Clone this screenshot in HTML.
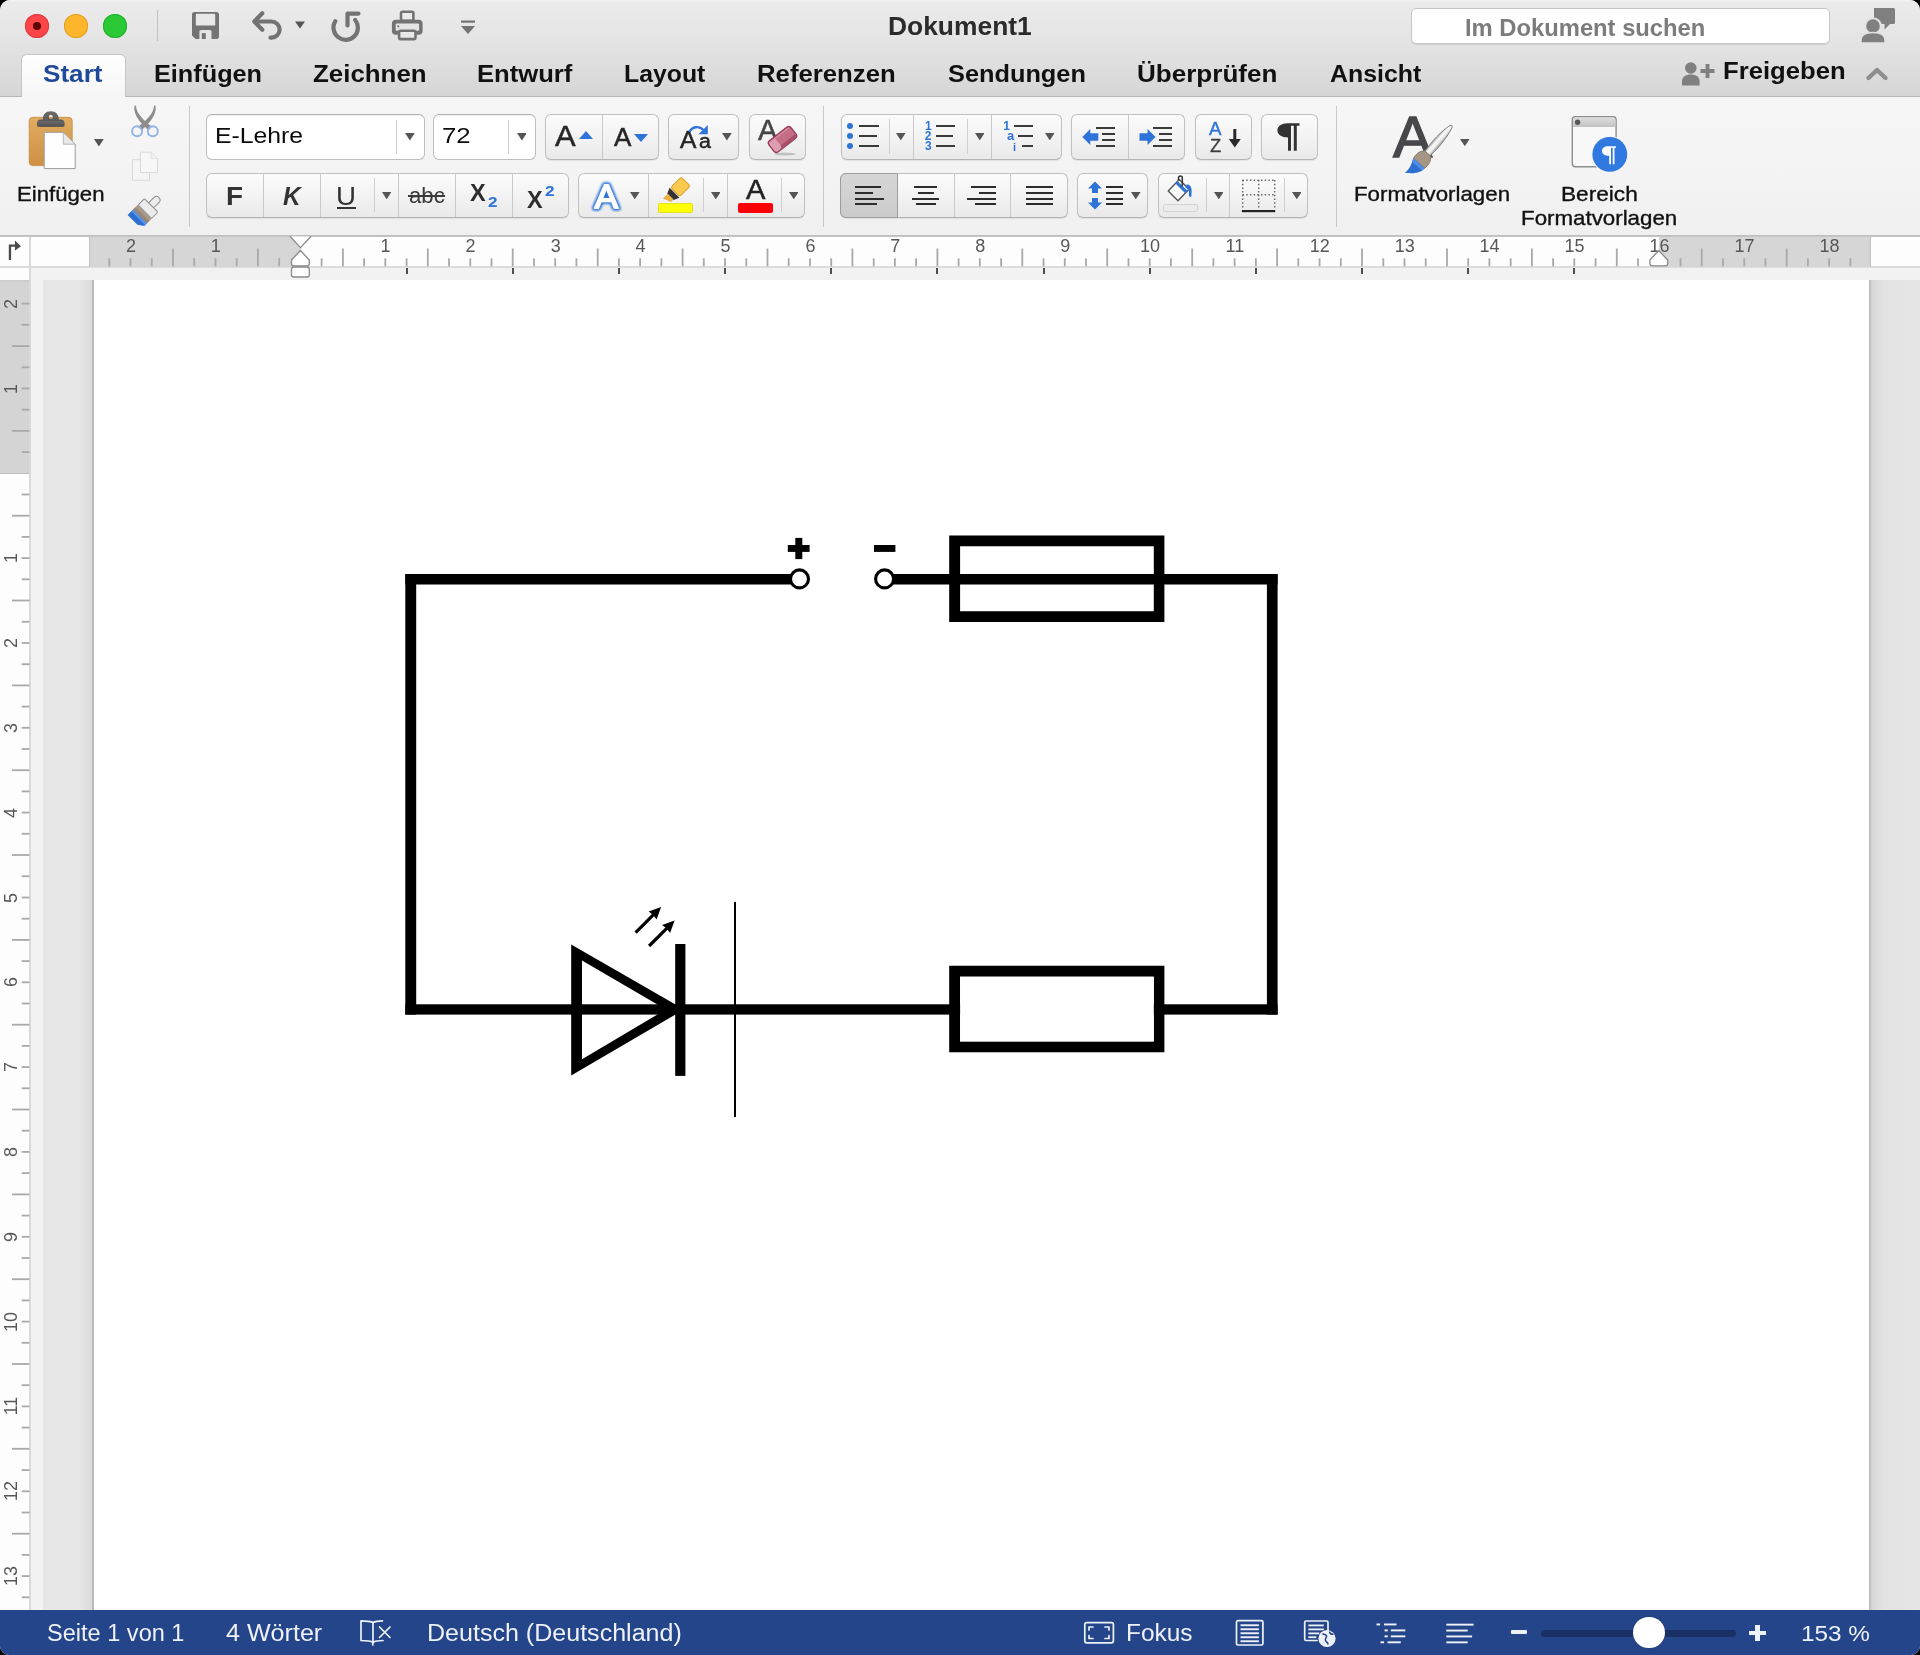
<!DOCTYPE html>
<html><head><meta charset="utf-8"><title>Dokument1</title>
<style>
html,body{margin:0;padding:0}
body{width:1920px;height:1655px;background:#000;position:relative;overflow:hidden;font-family:"Liberation Sans",sans-serif;}
#win{position:absolute;left:0;top:0;width:1920px;height:1655px;border-radius:10px 10px 9px 9px;overflow:hidden;background:#fff;will-change:transform;}
.a{position:absolute;display:block}
.t{position:absolute;white-space:nowrap;line-height:1;transform-origin:0 50%;display:block}
</style></head>
<body>
<div id="win">
<!-- title -->
<div class="a" style="left:0px;top:0px;width:1920px;height:96px;background:linear-gradient(#f3f3f3 0px,#ebebeb 2px,#e4e4e4 40px,#d6d6d6 96px);"></div>
<div class="a" style="left:0px;top:96px;width:1920px;height:1.8px;background:linear-gradient(#b3b3b3,#c6c6c6);"></div>
<div class="a" style="left:25px;top:13.5px;width:24px;height:24px;border-radius:50%;background:#fc4548;box-shadow:inset 0 0 0 1px #e2383c;"></div>
<div class="a" style="left:64px;top:13.5px;width:24px;height:24px;border-radius:50%;background:#fdb62c;box-shadow:inset 0 0 0 1px #e0a024;"></div>
<div class="a" style="left:103px;top:13.5px;width:24px;height:24px;border-radius:50%;background:#2ac935;box-shadow:inset 0 0 0 1px #24ad2c;"></div>
<div class="a" style="left:33px;top:21.5px;width:8px;height:8px;border-radius:50%;background:#5b0001;"></div>
<div class="a" style="left:157px;top:10px;width:1px;height:31px;background:#c2c2c2;"></div>
<svg class="a" style="left:192px;top:12px;" width="27" height="27" viewBox="0 0 27 27"><path d="M2.500 0H24.500A2.500 2.500 0 0 1 27 2.500V24.500A2.500 2.500 0 0 1 24.500 27H3.500L0 23.500V2.500A2.500 2.500 0 0 1 2.500 0Z" fill="#737373"/><rect x="3.800" y="1.800" width="19.400" height="11.800" rx="1.200" fill="#e8e8e8"/><path d="M7.400 27V19.600A1.700 1.700 0 0 1 9.100 17.900H17.800A1.700 1.700 0 0 1 19.500 19.600V27Z" fill="#e4e4e4"/><rect x="9.800" y="21.100" width="4" height="5.900" fill="#737373"/></svg>
<svg class="a" style="left:250px;top:10px;" width="34" height="32" viewBox="0 0 34 32"><path d="M12.300 3.300L4.300 11.500L12.300 19.700" fill="none" stroke="#737373" stroke-width="4.200" stroke-linecap="round" stroke-linejoin="round"/><path d="M5 11.500H21.500A8.100 8.100 0 0 1 21.500 27.700H20.500" fill="none" stroke="#737373" stroke-width="4.200" stroke-linecap="round"/></svg>
<svg class="a" style="left:295px;top:21px;" width="10" height="8" viewBox="0 0 10 8"><path d="M0 0.500H10L5 7.500Z" fill="#555"/></svg>
<svg class="a" style="left:329px;top:8px;" width="34" height="34" viewBox="0 0 34 34"><path d="M6.300 13.200A12.200 12.200 0 1 0 26.200 12" fill="none" stroke="#737373" stroke-width="4.200" stroke-linecap="round"/><path d="M18.500 17.500V5.600H29.500" fill="none" stroke="#737373" stroke-width="4.200" stroke-linecap="round" stroke-linejoin="round"/></svg>
<svg class="a" style="left:390px;top:9px;" width="34" height="33" viewBox="0 0 34 33"><rect x="11" y="2.800" width="12.400" height="9" rx="1.500" fill="#ebebeb" stroke="#737373" stroke-width="2.600"/><rect x="1.900" y="10.700" width="30.700" height="15" rx="4" fill="#737373"/><rect x="5.700" y="14.400" width="23.400" height="7.300" rx="1" fill="#e4e4e4"/><circle cx="8.300" cy="17.300" r="1.100" fill="#737373"/><rect x="9.100" y="21.700" width="16.400" height="8.400" rx="1.500" fill="#e9e9e9" stroke="#737373" stroke-width="2.600"/></svg>
<svg class="a" style="left:460px;top:19px;" width="16" height="17" viewBox="0 0 16 17"><rect x="1" y="1.500" width="14" height="2.200" fill="#737373"/><path d="M1 7H15L8 15Z" fill="#737373"/></svg>
<span class="t" style="left:888.0px;top:14.0px;font-size:25px;color:#2b2b2b;font-weight:bold;transform:scaleX(1.0557);">Dokument1</span>
<div class="a" style="left:1411px;top:7.5px;width:418.5px;height:36px;background:#fff;border:1px solid #c6c6c6;border-radius:5px;box-sizing:border-box;box-shadow:0 1px 0 rgba(0,0,0,.08);"></div>
<span class="t" style="left:1465.1px;top:16.0px;font-size:24px;color:#7c7c7c;font-weight:bold;transform:scaleX(0.9902);">Im Dokument suchen</span>
<svg class="a" style="left:1860px;top:7px;" width="36" height="37" viewBox="0 0 36 37"><path d="M14 1H33.500A1.500 1.500 0 0 1 35 2.500V15.500A1.500 1.500 0 0 1 33.500 17H30L24.500 22.500V17H14Z" fill="#808080"/><circle cx="13" cy="19" r="7.800" fill="#808080" stroke="#e2e2e2" stroke-width="2"/><path d="M1 36V33C1 28 5.500 25.500 13 25.500S25 28 25 33V36Z" fill="#808080" stroke="#e2e2e2" stroke-width="1.500"/></svg>
<div class="a" style="left:22px;top:55px;width:103px;height:42px;background:linear-gradient(#fefefe,#f6f6f6);border-radius:5px 5px 0 0;box-shadow:0 0 0 1px #c4c4c4;"></div>
<div class="a" style="left:22px;top:96px;width:103px;height:2.5px;background:#f6f6f6;"></div>
<span class="t" style="left:43.0px;top:62.0px;font-size:24px;color:#1f4a9a;font-weight:bold;transform:scaleX(1.0884);">Start</span>
<span class="t" style="left:153.9px;top:62.0px;font-size:24px;color:#111;font-weight:bold;transform:scaleX(1.0526);">Einfügen</span>
<span class="t" style="left:313.2px;top:62.0px;font-size:24px;color:#111;font-weight:bold;transform:scaleX(1.0780);">Zeichnen</span>
<span class="t" style="left:476.9px;top:62.0px;font-size:24px;color:#111;font-weight:bold;transform:scaleX(1.0678);">Entwurf</span>
<span class="t" style="left:624.0px;top:62.0px;font-size:24px;color:#111;font-weight:bold;transform:scaleX(1.0338);">Layout</span>
<span class="t" style="left:757.0px;top:62.0px;font-size:24px;color:#111;font-weight:bold;transform:scaleX(1.0719);">Referenzen</span>
<span class="t" style="left:947.5px;top:62.0px;font-size:24px;color:#111;font-weight:bold;transform:scaleX(1.0553);">Sendungen</span>
<span class="t" style="left:1137.1px;top:62.0px;font-size:24px;color:#111;font-weight:bold;transform:scaleX(1.0854);">Überprüfen</span>
<span class="t" style="left:1329.5px;top:62.0px;font-size:24px;color:#111;font-weight:bold;transform:scaleX(1.0372);">Ansicht</span>
<span class="t" style="left:1722.9px;top:59.0px;font-size:24px;color:#111;font-weight:bold;transform:scaleX(1.0694);">Freigeben</span>
<svg class="a" style="left:1681px;top:60px;" width="36" height="26" viewBox="0 0 36 26"><circle cx="9.800" cy="8" r="5.800" fill="#808080"/><path d="M1 25.500V21.500C1 17 4.500 14.600 9.800 14.600S18.600 17 18.600 21.500V25.500Z" fill="#808080"/><path d="M26.500 4V18M19.500 11H33.500" stroke="#808080" stroke-width="3.900" fill="none"/></svg>
<svg class="a" style="left:1865px;top:65px;" width="24" height="17" viewBox="0 0 24 17"><path d="M3.500 13L12 5L20.500 13" fill="none" stroke="#8e8e8e" stroke-width="4.400" stroke-linecap="round" stroke-linejoin="round"/></svg>
<!-- ribbon -->
<div class="a" style="left:0px;top:97px;width:1920px;height:138px;background:linear-gradient(#f6f6f6,#f4f4f4 40%,#f0f0f0);"></div>
<div class="a" style="left:0px;top:235px;width:1920px;height:2px;background:linear-gradient(#bcbcbc,#c9c9c9);"></div>
<svg class="a" style="left:27px;top:109px;" width="52" height="62" viewBox="0 0 52 62"><defs><linearGradient id="cb" x1="0" y1="0" x2="0" y2="1"><stop offset="0" stop-color="#e2ac60"/><stop offset="1" stop-color="#cf9044"/></linearGradient><linearGradient id="cl" x1="0" y1="0" x2="0" y2="1"><stop offset="0" stop-color="#6a6a6a"/><stop offset="1" stop-color="#505050"/></linearGradient></defs><rect x="2.200" y="8.300" width="43" height="48.300" rx="3.500" fill="url(#cb)" stroke="#c08a44" stroke-width="0.800"/><path d="M10.200 17.600V14A3.500 3.500 0 0 1 13.700 10.500H15.800C15.800 5.500 18.800 2.300 23.800 2.300S31.800 5.500 31.800 10.500H33.900A3.500 3.500 0 0 1 37.400 14V17.600Z" fill="url(#cl)"/><rect x="10.200" y="12" width="27.200" height="5.700" rx="2.800" fill="url(#cl)"/><circle cx="23.800" cy="7.700" r="1.900" fill="#f1e3cc"/><path d="M21.900 7.900A1.900 1.900 0 0 0 25.700 7.900Z" fill="#d89b4a"/><path d="M17.200 23.300H36.300L48.200 35.200V59.600H17.200Z" fill="#fefefe" stroke="#9a9a9a" stroke-width="1"/><path d="M36.300 23.300V35.200H48.200Z" fill="#e9e9e9" stroke="#a8a8a8" stroke-width="0.800"/></svg>
<svg class="a" style="left:94.0px;top:138.85px;" width="9.8" height="7.5" viewBox="0 0 9.8 7.5"><path d="M0 0H9.8L4.9 7.5Z" fill="#555"/></svg>
<span class="t" style="left:16.8px;top:183.0px;font-size:21px;color:#111;transform:scaleX(1.0558);-webkit-text-stroke:0.350px #111;">Einfügen</span>
<svg class="a" style="left:129px;top:104px;" width="32" height="35" viewBox="0 0 32 35"><path d="M6.300 2.200C6.300 7 8.500 12.500 21.800 23L19.400 25.200C8.500 15.500 5 9 6.300 2.200Z" fill="#8d8d8d" stroke="#8d8d8d" stroke-width="1.600" stroke-linejoin="round"/><path d="M25.700 2.200C25.700 7 23.500 12.500 10.200 23L12.600 25.200C23.500 15.500 27 9 25.700 2.200Z" fill="#8d8d8d" stroke="#8d8d8d" stroke-width="1.600" stroke-linejoin="round"/><circle cx="8.100" cy="27.200" r="5" fill="none" stroke="#8fb4e6" stroke-width="1.900"/><circle cx="23.800" cy="27.200" r="5" fill="none" stroke="#8fb4e6" stroke-width="1.900"/></svg>
<svg class="a" style="left:130px;top:150px;" width="30" height="33" viewBox="0 0 30 33"><rect x="2.500" y="9.700" width="17" height="20.500" fill="#f5f5f5" stroke="#d9d9d9" stroke-width="1"/><path d="M10.500 2.200H21L27.500 8.700V22.500H10.500Z" fill="#f7f7f7" stroke="#d9d9d9" stroke-width="1"/><path d="M21 2.200V8.700H27.500" fill="#efefef" stroke="#dcdcdc" stroke-width="0.800"/></svg>
<svg class="a" style="left:126px;top:194px;" width="38" height="34" viewBox="0 0 38 34"><g transform="translate(19.500 17) rotate(45)"><rect x="-3.600" y="-19" width="7.200" height="13" rx="3.600" fill="#ececec" stroke="#8b8b8b" stroke-width="1"/><rect x="-9.500" y="-8" width="19" height="9" rx="1.300" fill="#ebebeb" stroke="#8b8b8b" stroke-width="1"/><path d="M-9.800 1H9.800V8H-9.800Z" fill="#a8998a"/><path d="M-9.800 4.500H9.800V8H-9.800Z" fill="#97887a"/><path d="M-9.800 8H9.800V11.500L4 15.500H-9.800Z" fill="#2d6fd0"/><path d="M-9.800 8H9.800V10.200H-9.800Z" fill="#5596ea"/></g></svg>
<div class="a" style="left:189px;top:106px;width:1px;height:121px;background:#c8c8c8;"></div>
<div class="a" style="left:205.5px;top:113.500px;width:219.0px;height:46.500px;box-sizing:border-box;border:1.500px solid #bdbdbd;border-top-color:#b1b1b1;border-radius:6px;background:#fff;box-shadow:inset 0 1px 1px rgba(0,0,0,.06);"></div>
<div class="a" style="left:432.5px;top:113.500px;width:103.5px;height:46.500px;box-sizing:border-box;border:1.500px solid #bdbdbd;border-top-color:#b1b1b1;border-radius:6px;background:#fff;box-shadow:inset 0 1px 1px rgba(0,0,0,.06);"></div>
<div class="a" style="left:395.7px;top:119.5px;width:1px;height:34px;background:#cfcfcf;"></div>
<div class="a" style="left:507.5px;top:119.5px;width:1px;height:34px;background:#cfcfcf;"></div>
<svg class="a" style="left:404.90000000000003px;top:133.0px;" width="9.8" height="7.6" viewBox="0 0 9.8 7.6"><path d="M0 0H9.8L4.9 7.6Z" fill="#555"/></svg>
<svg class="a" style="left:516.5px;top:133.0px;" width="9.8" height="7.6" viewBox="0 0 9.8 7.6"><path d="M0 0H9.8L4.9 7.6Z" fill="#555"/></svg>
<span class="t" style="left:214.6px;top:125.0px;font-size:22px;color:#0c0c0c;transform:scaleX(1.1258);">E-Lehre</span>
<span class="t" style="left:441.5px;top:125.0px;font-size:22px;color:#0c0c0c;transform:scaleX(1.1689);">72</span>
<div class="a" style="left:545px;top:113.5px;width:114px;height:46.5px;box-sizing:border-box;border:1.300px solid #c0c0c0;border-bottom-color:#b4b4b4;border-radius:6px;background:linear-gradient(#fbfbfb,#f3f3f3 50%,#e9e9e9);box-shadow:0 1px 1px rgba(0,0,0,.07);"></div><div class="a" style="left:601.5px;top:114.5px;width:1px;height:44.5px;background:#c9c9c9;"></div>
<span class="t" style="left:555.3px;top:121.0px;font-size:30px;color:#262626;transform:scaleX(1.0300);-webkit-text-stroke:0.500px #262626;">A</span>
<svg class="a" style="left:579.4px;top:131px;" width="14" height="8" viewBox="0 0 14 8"><path d="M0 8L7 0L14 8Z" fill="#2e74d8"/></svg>
<span class="t" style="left:613.6px;top:125.0px;font-size:25px;color:#262626;transform:scaleX(1.0424);-webkit-text-stroke:0.500px #262626;">A</span>
<svg class="a" style="left:633.5px;top:134.1px;" width="14" height="8" viewBox="0 0 14 8"><path d="M0 0H14L7 8Z" fill="#2e74d8"/></svg>
<div class="a" style="left:668.3px;top:113.5px;width:70.5px;height:46.5px;box-sizing:border-box;border:1.300px solid #c0c0c0;border-bottom-color:#b4b4b4;border-radius:6px;background:linear-gradient(#fbfbfb,#f3f3f3 50%,#e9e9e9);box-shadow:0 1px 1px rgba(0,0,0,.07);"></div>
<span class="t" style="left:679.8px;top:128.0px;font-size:24px;color:#262626;transform:scaleX(1.0250);-webkit-text-stroke:0.500px #262626;">A</span>
<span class="t" style="left:699.2px;top:131.0px;font-size:20px;color:#262626;transform:scaleX(1.0667);-webkit-text-stroke:0.500px #262626;">a</span>
<svg class="a" style="left:686px;top:122px;" width="24" height="14" viewBox="0 0 24 14"><path d="M3.500 10C6 4.500 13 3.500 17.500 8" fill="none" stroke="#2e74d8" stroke-width="2.300"/><path d="M21.800 3V12.200H12.500Z" fill="#2e74d8"/></svg>
<svg class="a" style="left:722.1px;top:133.3px;" width="9.8" height="7.4" viewBox="0 0 9.8 7.4"><path d="M0 0H9.8L4.9 7.4Z" fill="#555"/></svg>
<div class="a" style="left:748.5px;top:113.5px;width:57.0px;height:46.5px;box-sizing:border-box;border:1.300px solid #c0c0c0;border-bottom-color:#b4b4b4;border-radius:6px;background:linear-gradient(#fbfbfb,#f3f3f3 50%,#e9e9e9);box-shadow:0 1px 1px rgba(0,0,0,.07);"></div>
<span class="t" style="left:757.6px;top:116.0px;font-size:29px;color:#454545;transform:scaleX(1.0026);-webkit-text-stroke:0.500px #454545;">A</span>
<svg class="a" style="left:764px;top:122px;" width="36" height="36" viewBox="0 0 36 36"><ellipse cx="21" cy="32" rx="11" ry="1.500" fill="rgba(0,0,0,.18)"/><g transform="translate(18.500 17.500) rotate(-38)"><rect x="-14" y="-7" width="28" height="14" rx="3.200" fill="#c56f87" stroke="#9a3d58" stroke-width="1.400"/><path d="M-13.500 3.500H13.500V4A3 3 0 0 1 10.500 7H-10.500A3 3 0 0 1 -13.500 4Z" fill="#a8506a"/><rect x="-13.200" y="-6.200" width="8" height="12.400" rx="2.500" fill="#dca0b1"/><path d="M-12 -5.500H12" stroke="#d68fa3" stroke-width="1.200"/></g></svg>
<div class="a" style="left:206px;top:173px;width:362.6px;height:45px;box-sizing:border-box;border:1.300px solid #c0c0c0;border-bottom-color:#b4b4b4;border-radius:6px;background:linear-gradient(#fbfbfb,#f3f3f3 50%,#e9e9e9);box-shadow:0 1px 1px rgba(0,0,0,.07);"></div><div class="a" style="left:262.5px;top:174px;width:1px;height:43px;background:#c9c9c9;"></div><div class="a" style="left:319.5px;top:174px;width:1px;height:43px;background:#c9c9c9;"></div><div class="a" style="left:397.5px;top:174px;width:1px;height:43px;background:#c9c9c9;"></div><div class="a" style="left:454.5px;top:174px;width:1px;height:43px;background:#c9c9c9;"></div><div class="a" style="left:511.5px;top:174px;width:1px;height:43px;background:#c9c9c9;"></div><div class="a" style="left:374.3px;top:178px;width:1px;height:34px;background:#cfcfcf;"></div>
<span class="t" style="left:226.0px;top:183.0px;font-size:26px;color:#333;font-weight:bold;transform:scaleX(1.0717);">F</span>
<span class="t" style="left:283.0px;top:183.0px;font-size:26px;color:#333;font-weight:bold;transform:scaleX(0.9367);font-style:italic;">K</span>
<span class="t" style="left:336.1px;top:184.0px;font-size:25px;color:#333;transform:scaleX(1.1088);">U</span>
<div class="a" style="left:337px;top:207.2px;width:19px;height:1.9px;background:#333;"></div>
<svg class="a" style="left:381.7px;top:191.9px;" width="9.4" height="7.4" viewBox="0 0 9.4 7.4"><path d="M0 0H9.4L4.7 7.4Z" fill="#555"/></svg>
<span class="t" style="left:408.7px;top:185.0px;font-size:22px;color:#3a3a3a;transform:scaleX(1.0088);">abc</span>
<div class="a" style="left:408.3px;top:195.4px;width:36.7px;height:1.6px;background:#3a3a3a;"></div>
<span class="t" style="left:469.8px;top:181.0px;font-size:24px;color:#2e2e2e;font-weight:bold;transform:scaleX(0.9806);">X</span>
<span class="t" style="left:488.3px;top:194.0px;font-size:15.5px;color:#2e74d8;font-weight:bold;transform:scaleX(1.1067);">2</span>
<span class="t" style="left:526.5px;top:188.0px;font-size:24px;color:#2e2e2e;font-weight:bold;transform:scaleX(0.9806);">X</span>
<span class="t" style="left:544.8px;top:183.0px;font-size:15.5px;color:#2e74d8;font-weight:bold;transform:scaleX(1.1067);">2</span>
<div class="a" style="left:578.4px;top:173px;width:227.10000000000002px;height:45px;box-sizing:border-box;border:1.300px solid #c0c0c0;border-bottom-color:#b4b4b4;border-radius:6px;background:linear-gradient(#fbfbfb,#f3f3f3 50%,#e9e9e9);box-shadow:0 1px 1px rgba(0,0,0,.07);"></div><div class="a" style="left:648.2px;top:174px;width:1px;height:43px;background:#c9c9c9;"></div><div class="a" style="left:726.7px;top:174px;width:1px;height:43px;background:#c9c9c9;"></div><div class="a" style="left:703.0px;top:178px;width:1px;height:34px;background:#cfcfcf;"></div><div class="a" style="left:781.3px;top:178px;width:1px;height:34px;background:#cfcfcf;"></div>
<svg class="a" style="left:588px;top:178px;" width="38" height="34" viewBox="0 0 38 34"><defs><filter id="gl" x="-20%" y="-20%" width="140%" height="140%"><feGaussianBlur stdDeviation="0.900"/></filter></defs><g transform="translate(6.800 29.500) scale(1.04 1)" font-family="Liberation Sans" font-size="33.500"><text x="0" y="0" fill="#2e74d8" stroke="#2e74d8" stroke-width="5.400" stroke-linejoin="round" filter="url(#gl)">A</text><text x="0" y="0" fill="#fff" stroke="#fff" stroke-width="1.900" stroke-linejoin="round">A</text></g></svg>
<svg class="a" style="left:630.3000000000001px;top:192.04999999999998px;" width="9.6" height="7.3" viewBox="0 0 9.6 7.3"><path d="M0 0H9.6L4.8 7.3Z" fill="#555"/></svg>
<svg class="a" style="left:660px;top:176px;" width="32" height="28" viewBox="0 0 32 28"><g transform="translate(17.200 14) rotate(45)"><rect x="-6.400" y="-12" width="12.800" height="14.800" rx="2.300" fill="#fbc94f" stroke="#d9a32b" stroke-width="1"/><path d="M-7 3.800H7L4.600 9.500H-4.600Z" fill="#343434"/><path d="M-3.700 9.600H3.700V12.500L-3.700 15.500Z" fill="#f0b33c" stroke="#cf962a" stroke-width="0.600"/></g></svg>
<div class="a" style="left:657.8px;top:203.3px;width:35px;height:9.6px;background:#ffff0a;border:1px solid #e3e31c;box-sizing:border-box;border-radius:2px;"></div>
<svg class="a" style="left:710.5px;top:191.85px;" width="9.6" height="7.3" viewBox="0 0 9.6 7.3"><path d="M0 0H9.6L4.8 7.3Z" fill="#555"/></svg>
<span class="t" style="left:745.8px;top:177.0px;font-size:27px;color:#222;transform:scaleX(1.0778);-webkit-text-stroke:0.500px #262626;">A</span>
<div class="a" style="left:738px;top:203.3px;width:35px;height:9.6px;background:#fb0007;border-radius:2px;"></div>
<svg class="a" style="left:788.9000000000001px;top:191.85px;" width="9.6" height="7.3" viewBox="0 0 9.6 7.3"><path d="M0 0H9.6L4.8 7.3Z" fill="#555"/></svg>
<div class="a" style="left:822.7px;top:106px;width:1px;height:121px;background:#c8c8c8;"></div>
<div class="a" style="left:840.5px;top:113.5px;width:221.29999999999995px;height:46.5px;box-sizing:border-box;border:1.300px solid #c0c0c0;border-bottom-color:#b4b4b4;border-radius:6px;background:linear-gradient(#fbfbfb,#f3f3f3 50%,#e9e9e9);box-shadow:0 1px 1px rgba(0,0,0,.07);"></div><div class="a" style="left:912.5px;top:114.5px;width:1px;height:44.5px;background:#c9c9c9;"></div><div class="a" style="left:990.9px;top:114.5px;width:1px;height:44.5px;background:#c9c9c9;"></div><div class="a" style="left:889.0px;top:118.5px;width:1px;height:35.5px;background:#cfcfcf;"></div><div class="a" style="left:967.1px;top:118.5px;width:1px;height:35.5px;background:#cfcfcf;"></div>
<div class="a" style="left:847.300px;top:122.9px;width:6.200px;height:6.200px;border-radius:50%;background:#2e74d8;"></div>
<div class="a" style="left:847.300px;top:132.9px;width:6.200px;height:6.200px;border-radius:50%;background:#2e74d8;"></div>
<div class="a" style="left:847.300px;top:142.9px;width:6.200px;height:6.200px;border-radius:50%;background:#2e74d8;"></div>
<div class="a" style="left:859px;top:125px;width:20px;height:2.1px;background:#3a3a3a;"></div><div class="a" style="left:859px;top:135px;width:17.5px;height:2.1px;background:#3a3a3a;"></div><div class="a" style="left:859px;top:145px;width:20px;height:2.1px;background:#3a3a3a;"></div>
<svg class="a" style="left:896.4000000000001px;top:132.9px;" width="9.6" height="7.4" viewBox="0 0 9.6 7.4"><path d="M0 0H9.6L4.8 7.4Z" fill="#555"/></svg>
<span class="t" style="left:924.9px;top:120.0px;font-size:12px;color:#2e74d8;font-weight:bold;">1</span>
<span class="t" style="left:924.7px;top:130.0px;font-size:12px;color:#2e74d8;font-weight:bold;">2</span>
<span class="t" style="left:925.0px;top:140.0px;font-size:12px;color:#2e74d8;font-weight:bold;">3</span>
<div class="a" style="left:935.6px;top:125px;width:19.4px;height:2.1px;background:#3a3a3a;"></div><div class="a" style="left:935.6px;top:135px;width:17.3px;height:2.1px;background:#3a3a3a;"></div><div class="a" style="left:935.6px;top:145px;width:19.4px;height:2.1px;background:#3a3a3a;"></div>
<svg class="a" style="left:974.7px;top:132.9px;" width="9.6" height="7.4" viewBox="0 0 9.6 7.4"><path d="M0 0H9.6L4.8 7.4Z" fill="#555"/></svg>
<span class="t" style="left:1003.2px;top:120.0px;font-size:12px;color:#2e74d8;font-weight:bold;">1</span>
<span class="t" style="left:1007.0px;top:129.0px;font-size:13px;color:#2e74d8;font-weight:bold;">a</span>
<span class="t" style="left:1012.9px;top:142.0px;font-size:11px;color:#2e74d8;font-weight:bold;">i</span>
<div class="a" style="left:1013.9px;top:125px;width:19.4px;height:2.1px;background:#3a3a3a;"></div>
<div class="a" style="left:1017.9px;top:135px;width:15.4px;height:2.1px;background:#3a3a3a;"></div>
<div class="a" style="left:1021.9px;top:145px;width:11.4px;height:2.1px;background:#3a3a3a;"></div>
<svg class="a" style="left:1045.2px;top:132.9px;" width="9.6" height="7.4" viewBox="0 0 9.6 7.4"><path d="M0 0H9.6L4.8 7.4Z" fill="#555"/></svg>
<div class="a" style="left:1071.3px;top:113.5px;width:113.70000000000005px;height:46.5px;box-sizing:border-box;border:1.300px solid #c0c0c0;border-bottom-color:#b4b4b4;border-radius:6px;background:linear-gradient(#fbfbfb,#f3f3f3 50%,#e9e9e9);box-shadow:0 1px 1px rgba(0,0,0,.07);"></div><div class="a" style="left:1127.5px;top:114.5px;width:1px;height:44.5px;background:#c9c9c9;"></div>
<svg class="a" style="left:1082px;top:129px;" width="17" height="16" viewBox="0 0 17 16"><path d="M0.300 8L8.300 0V4.300H16.300V11.700H8.300V16Z" fill="#2e74d8"/></svg>
<div class="a" style="left:1096.2px;top:127px;width:19.3px;height:2.1px;background:#3a3a3a;"></div>
<div class="a" style="left:1102.3px;top:133px;width:13.2px;height:2.1px;background:#3a3a3a;"></div>
<div class="a" style="left:1102.3px;top:139.1px;width:13.2px;height:2.1px;background:#3a3a3a;"></div>
<div class="a" style="left:1096.2px;top:145.1px;width:19.3px;height:2.1px;background:#3a3a3a;"></div>
<svg class="a" style="left:1138.6px;top:129px;" width="17" height="16" viewBox="0 0 17 16"><path d="M16.500 8L8.500 0V4.300H0.500V11.700H8.500V16Z" fill="#2e74d8"/></svg>
<div class="a" style="left:1153.2px;top:127px;width:19px;height:2.1px;background:#3a3a3a;"></div>
<div class="a" style="left:1159px;top:133px;width:13.2px;height:2.1px;background:#3a3a3a;"></div>
<div class="a" style="left:1159px;top:139.1px;width:13.2px;height:2.1px;background:#3a3a3a;"></div>
<div class="a" style="left:1153.2px;top:145.1px;width:19px;height:2.1px;background:#3a3a3a;"></div>
<div class="a" style="left:1194.7px;top:113.5px;width:57.0px;height:46.5px;box-sizing:border-box;border:1.300px solid #c0c0c0;border-bottom-color:#b4b4b4;border-radius:6px;background:linear-gradient(#fbfbfb,#f3f3f3 50%,#e9e9e9);box-shadow:0 1px 1px rgba(0,0,0,.07);"></div>
<span class="t" style="left:1209.2px;top:120.0px;font-size:18.5px;color:#2e74d8;transform:scaleX(1.0122);-webkit-text-stroke:0.400px #2e74d8;">A</span>
<span class="t" style="left:1209.8px;top:137.0px;font-size:18px;color:#3c3c3c;transform:scaleX(1.0200);-webkit-text-stroke:0.300px #3c3c3c;">Z</span>
<svg class="a" style="left:1228px;top:128px;" width="14" height="21" viewBox="0 0 14 21"><path d="M5.300 1H8.300V11H12.800L6.800 19.500L0.800 11H5.300Z" fill="#2b2b2b"/></svg>
<div class="a" style="left:1261.3px;top:113.5px;width:56.700000000000045px;height:46.5px;box-sizing:border-box;border:1.300px solid #c0c0c0;border-bottom-color:#b4b4b4;border-radius:6px;background:linear-gradient(#fbfbfb,#f3f3f3 50%,#e9e9e9);box-shadow:0 1px 1px rgba(0,0,0,.07);"></div>
<svg class="a" style="left:1276px;top:122px;" width="26" height="30" viewBox="0 0 26 30"><path d="M11.500 1.200H23.500V3.800H20.800V28.700H17.800V3.800H15V28.700H12V15.500C5.500 15.500 1.400 12.500 1.400 8.300S5.500 1.200 11.500 1.200Z" fill="#333"/></svg>
<div class="a" style="left:840.2px;top:173px;width:227.79999999999995px;height:45px;box-sizing:border-box;border:1.300px solid #c0c0c0;border-bottom-color:#b4b4b4;border-radius:6px;background:linear-gradient(#fbfbfb,#f3f3f3 50%,#e9e9e9);box-shadow:0 1px 1px rgba(0,0,0,.07);"></div><div class="a" style="left:840.2px;top:173px;width:57.799999999999955px;height:45px;box-sizing:border-box;border:1px solid #9d9d9d;border-radius:6px 0 0 6px;background:linear-gradient(#d6d6d6,#cbcbcb);"></div><div class="a" style="left:953.5px;top:174px;width:1px;height:43px;background:#c9c9c9;"></div><div class="a" style="left:1010.2px;top:174px;width:1px;height:43px;background:#c9c9c9;"></div>
<div class="a" style="left:855.4px;top:185.9px;width:25.2px;height:2px;background:#2c2c2c;"></div><div class="a" style="left:855.4px;top:191.8px;width:17.2px;height:2px;background:#2c2c2c;"></div><div class="a" style="left:855.4px;top:197.6px;width:29.1px;height:2px;background:#2c2c2c;"></div><div class="a" style="left:855.4px;top:203.4px;width:21.2px;height:2px;background:#2c2c2c;"></div>
<div class="a" style="left:914.1px;top:185.9px;width:23.4px;height:2px;background:#2c2c2c;"></div><div class="a" style="left:917.9px;top:191.8px;width:15.9px;height:2px;background:#2c2c2c;"></div><div class="a" style="left:912.1px;top:197.6px;width:27.4px;height:2px;background:#2c2c2c;"></div><div class="a" style="left:916.0px;top:203.4px;width:19.6px;height:2px;background:#2c2c2c;"></div>
<div class="a" style="left:971px;top:185.9px;width:25px;height:2px;background:#2c2c2c;"></div><div class="a" style="left:978.9px;top:191.8px;width:17.1px;height:2px;background:#2c2c2c;"></div><div class="a" style="left:967px;top:197.6px;width:29px;height:2px;background:#2c2c2c;"></div><div class="a" style="left:975px;top:203.4px;width:21px;height:2px;background:#2c2c2c;"></div>
<div class="a" style="left:1025.6px;top:185.9px;width:27.3px;height:2px;background:#2c2c2c;"></div><div class="a" style="left:1025.6px;top:191.8px;width:27.3px;height:2px;background:#2c2c2c;"></div><div class="a" style="left:1025.6px;top:197.6px;width:27.3px;height:2px;background:#2c2c2c;"></div><div class="a" style="left:1025.6px;top:203.4px;width:27.3px;height:2px;background:#2c2c2c;"></div>
<div class="a" style="left:1077.3px;top:173px;width:70.70000000000005px;height:45px;box-sizing:border-box;border:1.300px solid #c0c0c0;border-bottom-color:#b4b4b4;border-radius:6px;background:linear-gradient(#fbfbfb,#f3f3f3 50%,#e9e9e9);box-shadow:0 1px 1px rgba(0,0,0,.07);"></div>
<svg class="a" style="left:1087px;top:181px;" width="16" height="29" viewBox="0 0 16 29"><path d="M8 0.500L15 7.500H11V12H5V7.500H1Z" fill="#2e74d8"/><path d="M8 28.500L15 21.500H11V17H5V21.500H1Z" fill="#2e74d8"/></svg>
<div class="a" style="left:1105.9px;top:185.8px;width:17.5px;height:2px;background:#2c2c2c;"></div><div class="a" style="left:1105.9px;top:191.7px;width:17.5px;height:2px;background:#2c2c2c;"></div><div class="a" style="left:1105.9px;top:197.5px;width:17.5px;height:2px;background:#2c2c2c;"></div><div class="a" style="left:1105.9px;top:203.4px;width:17.5px;height:2px;background:#2c2c2c;"></div>
<svg class="a" style="left:1131.3px;top:191.95px;" width="9.6" height="7.3" viewBox="0 0 9.6 7.3"><path d="M0 0H9.6L4.8 7.3Z" fill="#555"/></svg>
<div class="a" style="left:1157.6px;top:173px;width:150.70000000000005px;height:45px;box-sizing:border-box;border:1.300px solid #c0c0c0;border-bottom-color:#b4b4b4;border-radius:6px;background:linear-gradient(#fbfbfb,#f3f3f3 50%,#e9e9e9);box-shadow:0 1px 1px rgba(0,0,0,.07);"></div><div class="a" style="left:1229.1px;top:174px;width:1px;height:43px;background:#c9c9c9;"></div><div class="a" style="left:1205.9px;top:178px;width:1px;height:34px;background:#cfcfcf;"></div><div class="a" style="left:1284.2px;top:178px;width:1px;height:34px;background:#cfcfcf;"></div>
<svg class="a" style="left:1164px;top:173px;" width="32" height="32" viewBox="0 0 32 32"><path d="M15.300 6.500L25 16.300L14 27.800L4.200 18Z" fill="#fbfbfb" stroke="#555" stroke-width="1.400" stroke-linejoin="round"/><path d="M12.600 9.300L22.300 19" stroke="#2e74d8" stroke-width="3.200"/><path d="M22.500 11.500C27 11 28.500 15 27.300 23.500C26 24.500 24.800 23.500 24.800 22C25.300 17.500 24.500 15.500 21.500 15Z" fill="#2e74d8"/><path d="M18.300 13.500V5A1.900 1.900 0 0 0 14.500 5V7" fill="none" stroke="#333" stroke-width="1.500"/></svg>
<div class="a" style="left:1162.5px;top:203.7px;width:35.2px;height:8.8px;background:#ececec;border:1px solid #d4d4d4;box-sizing:border-box;border-radius:2px;"></div>
<svg class="a" style="left:1213.5px;top:191.95px;" width="9.6" height="7.3" viewBox="0 0 9.6 7.3"><path d="M0 0H9.6L4.8 7.3Z" fill="#555"/></svg>
<svg class="a" style="left:1240px;top:178px;" width="37" height="36" viewBox="0 0 37 36"><path d="M2.500 2.300H35M2.500 16.800H35" stroke="#6a6a6a" stroke-width="1.500" stroke-dasharray="1.500 2.200" fill="none"/><path d="M2.700 2V30.500M18.700 2V30.500M34.700 2V30.500" stroke="#6a6a6a" stroke-width="1.500" stroke-dasharray="1.500 2.200" fill="none"/><rect x="1.900" y="32" width="33.300" height="2.200" fill="#222"/></svg>
<svg class="a" style="left:1291.8px;top:191.95px;" width="9.6" height="7.3" viewBox="0 0 9.6 7.3"><path d="M0 0H9.6L4.8 7.3Z" fill="#555"/></svg>
<div class="a" style="left:1335.7px;top:106px;width:1px;height:121px;background:#c8c8c8;"></div>
<span class="t" style="left:1393.2px;top:109.0px;font-size:57px;color:#47474b;transform:scaleX(1.0331);-webkit-text-stroke:1.300px #47474b;">A</span>
<svg class="a" style="left:1400px;top:122px;" width="60" height="52" viewBox="0 0 60 52"><defs><linearGradient id="hd" x1="0" y1="0" x2="1" y2="0"><stop offset="0" stop-color="#9d9d9d"/><stop offset=".35" stop-color="#fdfdfd"/><stop offset=".7" stop-color="#e4e4e4"/><stop offset="1" stop-color="#8c8c8c"/></linearGradient></defs><g transform="translate(24.300 35.200) rotate(41)"><path d="M-3.400 -4C-4.800 -18 -4.300 -30 -1.500 -40.500C-0.800 -42.600 0.800 -42.600 1.500 -40.500C4.300 -30 4.800 -18 3.400 -4Z" fill="url(#hd)" stroke="#7e7e7e" stroke-width="0.900"/><path d="M-4 -5H4C7.500 -2 8.500 3 7.500 8H-7.500C-8.500 3 -7.500 -2 -4 -5Z" fill="#a49584" stroke="#85786a" stroke-width="0.900"/><path d="M-7.500 8H7.500C7.500 13 5 18 -4.500 24.500C-3 18 -5.500 13 -7.500 8Z" fill="#2c6fd1"/><path d="M-7.500 8H7.500C7.500 9.500 7.300 10.500 7 11.500H-6.500Z" fill="#4f8fe6"/></g></svg>
<svg class="a" style="left:1460.2px;top:139.1px;" width="9.6" height="7.2" viewBox="0 0 9.6 7.2"><path d="M0 0H9.6L4.8 7.2Z" fill="#555"/></svg>
<span class="t" style="left:1353.6px;top:183.0px;font-size:21px;color:#111;transform:scaleX(1.0611);-webkit-text-stroke:0.350px #111;">Formatvorlagen</span>
<svg class="a" style="left:1570px;top:114px;" width="60" height="60" viewBox="0 0 60 60"><defs><linearGradient id="wt" x1="0" y1="0" x2="0" y2="1"><stop offset="0" stop-color="#dedede"/><stop offset="1" stop-color="#c2c2c2"/></linearGradient></defs><rect x="2.300" y="2.800" width="43.800" height="50" rx="3" fill="#f8f8f8" stroke="#8e8e8e" stroke-width="1.400"/><path d="M3 13V5.500A2.300 2.300 0 0 1 5.300 3.500H43.100A2.300 2.300 0 0 1 45.400 5.500V13Z" fill="url(#wt)"/><circle cx="7.600" cy="8.200" r="2.700" fill="#575757"/><circle cx="39.800" cy="40.400" r="18.400" fill="#f3f3f3"/><circle cx="39.800" cy="40.400" r="17.400" fill="#2f79e0"/><path d="M38 32.200H46V33.700H44.500V50.200H42.700V33.700H41V50.200H39.200V41.700C34.500 41.700 32 39.800 32 36.900S34.500 32.200 38 32.200Z" fill="#fff"/></svg>
<span class="t" style="left:1560.5px;top:183.0px;font-size:21px;color:#111;transform:scaleX(1.0779);-webkit-text-stroke:0.350px #111;">Bereich</span>
<span class="t" style="left:1520.7px;top:207.0px;font-size:21px;color:#111;transform:scaleX(1.0625);-webkit-text-stroke:0.350px #111;">Formatvorlagen</span>
<!-- ruler -->
<div class="a" style="left:0px;top:237px;width:1920px;height:29.5px;background:#fdfdfd;"></div>
<div class="a" style="left:0px;top:266.3px;width:1920px;height:1.5px;background:#dcdcdc;"></div>
<div class="a" style="left:31px;top:267.8px;width:1889px;height:12.2px;background:#f2f2f2;"></div>
<div class="a" style="left:0px;top:267.8px;width:29.5px;height:12.2px;background:#fdfdfd;"></div>
<div class="a" style="left:88.5px;top:237px;width:212px;height:29.5px;background:linear-gradient(90deg,#bfbfbf 0,#d6d6d6 2px);"></div>
<div class="a" style="left:1659px;top:237px;width:212px;height:29.5px;background:linear-gradient(270deg,#bdbdbd 0,#d6d6d6 2px);"></div>
<svg class="a" style="left:6px;top:238px;" width="20" height="24" viewBox="0 0 20 24"><path d="M2.800 22V6.500H9V2.500L15 8.300L9 12.500V8.800H5.100V22Z" fill="#4a4a4a"/></svg>
<svg class="a" style="left:0px;top:237px;" width="1920" height="30" viewBox="0 0 1920 30"><g fill="#a9a9a9"><rect x="108.4" y="21.300" width="1.800" height="8"/><rect x="129.6" y="21.300" width="1.800" height="8"/><rect x="150.9" y="21.300" width="1.800" height="8"/><rect x="172.1" y="11.500" width="1.800" height="17.800"/><rect x="193.3" y="21.300" width="1.800" height="8"/><rect x="214.6" y="21.300" width="1.800" height="8"/><rect x="235.8" y="21.300" width="1.800" height="8"/><rect x="257.0" y="11.500" width="1.800" height="17.800"/><rect x="278.3" y="21.300" width="1.800" height="8"/><rect x="320.7" y="21.300" width="1.800" height="8"/><rect x="342.0" y="11.500" width="1.800" height="17.800"/><rect x="363.2" y="21.300" width="1.800" height="8"/><rect x="384.4" y="21.300" width="1.800" height="8"/><rect x="405.7" y="21.300" width="1.800" height="8"/><rect x="426.9" y="11.500" width="1.800" height="17.800"/><rect x="448.1" y="21.300" width="1.800" height="8"/><rect x="469.4" y="21.300" width="1.800" height="8"/><rect x="490.6" y="21.300" width="1.800" height="8"/><rect x="511.8" y="11.500" width="1.800" height="17.800"/><rect x="533.1" y="21.300" width="1.800" height="8"/><rect x="554.3" y="21.300" width="1.800" height="8"/><rect x="575.5" y="21.300" width="1.800" height="8"/><rect x="596.8" y="11.500" width="1.800" height="17.800"/><rect x="618.0" y="21.300" width="1.800" height="8"/><rect x="639.2" y="21.300" width="1.800" height="8"/><rect x="660.5" y="21.300" width="1.800" height="8"/><rect x="681.7" y="11.500" width="1.800" height="17.800"/><rect x="702.9" y="21.300" width="1.800" height="8"/><rect x="724.1" y="21.300" width="1.800" height="8"/><rect x="745.4" y="21.300" width="1.800" height="8"/><rect x="766.6" y="11.500" width="1.800" height="17.800"/><rect x="787.8" y="21.300" width="1.800" height="8"/><rect x="809.1" y="21.300" width="1.800" height="8"/><rect x="830.3" y="21.300" width="1.800" height="8"/><rect x="851.5" y="11.500" width="1.800" height="17.800"/><rect x="872.8" y="21.300" width="1.800" height="8"/><rect x="894.0" y="21.300" width="1.800" height="8"/><rect x="915.2" y="21.300" width="1.800" height="8"/><rect x="936.5" y="11.500" width="1.800" height="17.800"/><rect x="957.7" y="21.300" width="1.800" height="8"/><rect x="978.9" y="21.300" width="1.800" height="8"/><rect x="1000.2" y="21.300" width="1.800" height="8"/><rect x="1021.4" y="11.500" width="1.800" height="17.800"/><rect x="1042.6" y="21.300" width="1.800" height="8"/><rect x="1063.9" y="21.300" width="1.800" height="8"/><rect x="1085.1" y="21.300" width="1.800" height="8"/><rect x="1106.3" y="11.500" width="1.800" height="17.800"/><rect x="1127.6" y="21.300" width="1.800" height="8"/><rect x="1148.8" y="21.300" width="1.800" height="8"/><rect x="1170.0" y="21.300" width="1.800" height="8"/><rect x="1191.3" y="11.500" width="1.800" height="17.800"/><rect x="1212.5" y="21.300" width="1.800" height="8"/><rect x="1233.7" y="21.300" width="1.800" height="8"/><rect x="1255.0" y="21.300" width="1.800" height="8"/><rect x="1276.2" y="11.500" width="1.800" height="17.800"/><rect x="1297.4" y="21.300" width="1.800" height="8"/><rect x="1318.7" y="21.300" width="1.800" height="8"/><rect x="1339.9" y="21.300" width="1.800" height="8"/><rect x="1361.1" y="11.500" width="1.800" height="17.800"/><rect x="1382.4" y="21.300" width="1.800" height="8"/><rect x="1403.6" y="21.300" width="1.800" height="8"/><rect x="1424.8" y="21.300" width="1.800" height="8"/><rect x="1446.1" y="11.500" width="1.800" height="17.800"/><rect x="1467.3" y="21.300" width="1.800" height="8"/><rect x="1488.5" y="21.300" width="1.800" height="8"/><rect x="1509.8" y="21.300" width="1.800" height="8"/><rect x="1531.0" y="11.500" width="1.800" height="17.800"/><rect x="1552.2" y="21.300" width="1.800" height="8"/><rect x="1573.4" y="21.300" width="1.800" height="8"/><rect x="1594.7" y="21.300" width="1.800" height="8"/><rect x="1615.9" y="11.500" width="1.800" height="17.800"/><rect x="1637.1" y="21.300" width="1.800" height="8"/><rect x="1658.4" y="21.300" width="1.800" height="8"/><rect x="1679.6" y="21.300" width="1.800" height="8"/><rect x="1700.8" y="11.500" width="1.800" height="17.800"/><rect x="1722.1" y="21.300" width="1.800" height="8"/><rect x="1743.3" y="21.300" width="1.800" height="8"/><rect x="1764.5" y="21.300" width="1.800" height="8"/><rect x="1785.8" y="11.500" width="1.800" height="17.800"/><rect x="1807.0" y="21.300" width="1.800" height="8"/><rect x="1828.2" y="21.300" width="1.800" height="8"/><rect x="1849.5" y="21.300" width="1.800" height="8"/></g></svg>
<span class="t" style="left:125.9px;top:237.0px;font-size:18px;color:#575757;">2</span>
<span class="t" style="left:210.7px;top:237.0px;font-size:18px;color:#575757;">1</span>
<span class="t" style="left:380.6px;top:237.0px;font-size:18px;color:#575757;">1</span>
<span class="t" style="left:465.6px;top:237.0px;font-size:18px;color:#575757;">2</span>
<span class="t" style="left:550.7px;top:237.0px;font-size:18px;color:#575757;">3</span>
<span class="t" style="left:635.6px;top:237.0px;font-size:18px;color:#575757;">4</span>
<span class="t" style="left:720.5px;top:237.0px;font-size:18px;color:#575757;">5</span>
<span class="t" style="left:805.4px;top:237.0px;font-size:18px;color:#575757;">6</span>
<span class="t" style="left:890.3px;top:237.0px;font-size:18px;color:#575757;">7</span>
<span class="t" style="left:975.3px;top:237.0px;font-size:18px;color:#575757;">8</span>
<span class="t" style="left:1060.3px;top:237.0px;font-size:18px;color:#575757;">9</span>
<span class="t" style="left:1140.0px;top:237.0px;font-size:18px;color:#575757;">10</span>
<span class="t" style="left:1225.5px;top:237.0px;font-size:18px;color:#575757;">11</span>
<span class="t" style="left:1309.8px;top:237.0px;font-size:18px;color:#575757;">12</span>
<span class="t" style="left:1394.7px;top:237.0px;font-size:18px;color:#575757;">13</span>
<span class="t" style="left:1479.5px;top:237.0px;font-size:18px;color:#575757;">14</span>
<span class="t" style="left:1564.6px;top:237.0px;font-size:18px;color:#575757;">15</span>
<span class="t" style="left:1649.5px;top:237.0px;font-size:18px;color:#575757;">16</span>
<span class="t" style="left:1734.5px;top:237.0px;font-size:18px;color:#575757;">17</span>
<span class="t" style="left:1819.4px;top:237.0px;font-size:18px;color:#575757;">18</span>
<div class="a" style="left:406px;top:268.3px;width:2px;height:5.4px;background:#4d4d4d;"></div>
<div class="a" style="left:512px;top:268.3px;width:2px;height:5.4px;background:#4d4d4d;"></div>
<div class="a" style="left:618px;top:268.3px;width:2px;height:5.4px;background:#4d4d4d;"></div>
<div class="a" style="left:724px;top:268.3px;width:2px;height:5.4px;background:#4d4d4d;"></div>
<div class="a" style="left:830px;top:268.3px;width:2px;height:5.4px;background:#4d4d4d;"></div>
<div class="a" style="left:936px;top:268.3px;width:2px;height:5.4px;background:#4d4d4d;"></div>
<div class="a" style="left:1043px;top:268.3px;width:2px;height:5.4px;background:#4d4d4d;"></div>
<div class="a" style="left:1149px;top:268.3px;width:2px;height:5.4px;background:#4d4d4d;"></div>
<div class="a" style="left:1255px;top:268.3px;width:2px;height:5.4px;background:#4d4d4d;"></div>
<div class="a" style="left:1361px;top:268.3px;width:2px;height:5.4px;background:#4d4d4d;"></div>
<div class="a" style="left:1467px;top:268.3px;width:2px;height:5.4px;background:#4d4d4d;"></div>
<div class="a" style="left:1573px;top:268.3px;width:2px;height:5.4px;background:#4d4d4d;"></div>
<svg class="a" style="left:288px;top:236px;" width="25" height="43" viewBox="0 0 25 43"><path d="M2.300 0.500H22.700L12.500 11.800Z" fill="#fff"/><path d="M2 0.200L12.500 11.600L23 0.200" fill="none" stroke="#8a8a8a" stroke-width="1.300" stroke-linejoin="round"/><path d="M12.400 14.500L21.300 24V27.500Q21.300 29.800 19 29.800H5.800Q3.500 29.800 3.500 27.500V24Z" fill="#fff" stroke="#8a8a8a" stroke-width="1.300" stroke-linejoin="round"/><rect x="3.500" y="31" width="17.800" height="10" rx="2.300" fill="#fff" stroke="#8a8a8a" stroke-width="1.300" stroke-linejoin="round"/></svg>
<svg class="a" style="left:1646px;top:236px;" width="26" height="32" viewBox="0 0 26 32"><path d="M12.800 14.500L21.700 24V27.500Q21.700 29.800 19.400 29.800H6.200Q3.900 29.800 3.900 27.500V24Z" fill="#fff" stroke="#8a8a8a" stroke-width="1.300" stroke-linejoin="round"/></svg>
<!-- doc -->
<div class="a" style="left:0px;top:280px;width:1920px;height:1330px;background:#e5e5e5;"></div>
<div class="a" style="left:0px;top:280px;width:29.5px;height:1330px;background:#fdfdfd;"></div>
<div class="a" style="left:0px;top:280px;width:29.5px;height:193.5px;background:linear-gradient(#c9c9c9 0,#d4d4d4 3px,#d4d4d4);"></div>
<div class="a" style="left:0px;top:472.5px;width:29.5px;height:1.5px;background:#bdbdbd;"></div>
<div class="a" style="left:29.4px;top:237px;width:1.6px;height:1373px;background:#d9d9d9;"></div>
<div class="a" style="left:31px;top:280px;width:12px;height:1330px;background:#f2f2f2;"></div>
<div class="a" style="left:43px;top:280px;width:51px;height:1330px;background:linear-gradient(90deg,#e6e6e6 0,#e6e6e6 70%,#dbdbdb 95.500%,#b9b9b9 96.500%,#b9b9b9 100%);"></div>
<div class="a" style="left:1869px;top:280px;width:51px;height:1330px;background:linear-gradient(90deg,#b4b4b4 0,#d6d6d6 3px,#e3e3e3 14px,#e5e5e5);"></div>
<div class="a" style="left:94px;top:280px;width:1775px;height:1330px;background:#fff;"></div>
<svg class="a" style="left:0px;top:280px;" width="30" height="1330" viewBox="0 0 30 1330"><g fill="#a9a9a9"><rect x="21.700" y="22.7" width="7.800" height="1.800"/><rect x="21.700" y="43.9" width="7.800" height="1.800"/><rect x="12" y="65.2" width="17.500" height="1.800"/><rect x="21.700" y="86.4" width="7.800" height="1.800"/><rect x="21.700" y="107.6" width="7.800" height="1.800"/><rect x="21.700" y="128.8" width="7.800" height="1.800"/><rect x="12" y="150.0" width="17.500" height="1.800"/><rect x="21.700" y="171.2" width="7.800" height="1.800"/><rect x="21.700" y="213.6" width="7.800" height="1.800"/><rect x="12" y="234.8" width="17.500" height="1.800"/><rect x="21.700" y="256.0" width="7.800" height="1.800"/><rect x="21.700" y="277.2" width="7.800" height="1.800"/><rect x="21.700" y="298.4" width="7.800" height="1.800"/><rect x="12" y="319.6" width="17.500" height="1.800"/><rect x="21.700" y="340.9" width="7.800" height="1.800"/><rect x="21.700" y="362.1" width="7.800" height="1.800"/><rect x="21.700" y="383.3" width="7.800" height="1.800"/><rect x="12" y="404.5" width="17.500" height="1.800"/><rect x="21.700" y="425.7" width="7.800" height="1.800"/><rect x="21.700" y="446.9" width="7.800" height="1.800"/><rect x="21.700" y="468.1" width="7.800" height="1.800"/><rect x="12" y="489.3" width="17.500" height="1.800"/><rect x="21.700" y="510.5" width="7.800" height="1.800"/><rect x="21.700" y="531.7" width="7.800" height="1.800"/><rect x="21.700" y="552.9" width="7.800" height="1.800"/><rect x="12" y="574.1" width="17.500" height="1.800"/><rect x="21.700" y="595.3" width="7.800" height="1.800"/><rect x="21.700" y="616.6" width="7.800" height="1.800"/><rect x="21.700" y="637.8" width="7.800" height="1.800"/><rect x="12" y="659.0" width="17.500" height="1.800"/><rect x="21.700" y="680.2" width="7.800" height="1.800"/><rect x="21.700" y="701.4" width="7.800" height="1.800"/><rect x="21.700" y="722.6" width="7.800" height="1.800"/><rect x="12" y="743.8" width="17.500" height="1.800"/><rect x="21.700" y="765.0" width="7.800" height="1.800"/><rect x="21.700" y="786.2" width="7.800" height="1.800"/><rect x="21.700" y="807.4" width="7.800" height="1.800"/><rect x="12" y="828.6" width="17.500" height="1.800"/><rect x="21.700" y="849.8" width="7.800" height="1.800"/><rect x="21.700" y="871.0" width="7.800" height="1.800"/><rect x="21.700" y="892.2" width="7.800" height="1.800"/><rect x="12" y="913.5" width="17.500" height="1.800"/><rect x="21.700" y="934.7" width="7.800" height="1.800"/><rect x="21.700" y="955.9" width="7.800" height="1.800"/><rect x="21.700" y="977.1" width="7.800" height="1.800"/><rect x="12" y="998.3" width="17.500" height="1.800"/><rect x="21.700" y="1019.5" width="7.800" height="1.800"/><rect x="21.700" y="1040.7" width="7.800" height="1.800"/><rect x="21.700" y="1061.9" width="7.800" height="1.800"/><rect x="12" y="1083.1" width="17.500" height="1.800"/><rect x="21.700" y="1104.3" width="7.800" height="1.800"/><rect x="21.700" y="1125.5" width="7.800" height="1.800"/><rect x="21.700" y="1146.7" width="7.800" height="1.800"/><rect x="12" y="1167.9" width="17.500" height="1.800"/><rect x="21.700" y="1189.2" width="7.800" height="1.800"/><rect x="21.700" y="1210.4" width="7.800" height="1.800"/><rect x="21.700" y="1231.6" width="7.800" height="1.800"/><rect x="12" y="1252.8" width="17.500" height="1.800"/><rect x="21.700" y="1274.0" width="7.800" height="1.800"/><rect x="21.700" y="1295.2" width="7.800" height="1.800"/><rect x="21.700" y="1316.4" width="7.800" height="1.800"/></g></svg>
<span class="t" style="left:6.0px;top:294.6px;width:10.0px;font-size:18px;color:#575757;transform-origin:50% 50%;transform:rotate(-90deg);text-align:center;">2</span>
<span class="t" style="left:6.0px;top:379.5px;width:10.0px;font-size:18px;color:#575757;transform-origin:50% 50%;transform:rotate(-90deg);text-align:center;">1</span>
<span class="t" style="left:6.0px;top:549.1px;width:10.0px;font-size:18px;color:#575757;transform-origin:50% 50%;transform:rotate(-90deg);text-align:center;">1</span>
<span class="t" style="left:6.0px;top:634.0px;width:10.0px;font-size:18px;color:#575757;transform-origin:50% 50%;transform:rotate(-90deg);text-align:center;">2</span>
<span class="t" style="left:6.0px;top:718.8px;width:10.0px;font-size:18px;color:#575757;transform-origin:50% 50%;transform:rotate(-90deg);text-align:center;">3</span>
<span class="t" style="left:6.0px;top:803.6px;width:10.0px;font-size:18px;color:#575757;transform-origin:50% 50%;transform:rotate(-90deg);text-align:center;">4</span>
<span class="t" style="left:6.0px;top:888.5px;width:10.0px;font-size:18px;color:#575757;transform-origin:50% 50%;transform:rotate(-90deg);text-align:center;">5</span>
<span class="t" style="left:6.0px;top:973.3px;width:10.0px;font-size:18px;color:#575757;transform-origin:50% 50%;transform:rotate(-90deg);text-align:center;">6</span>
<span class="t" style="left:6.0px;top:1058.1px;width:10.0px;font-size:18px;color:#575757;transform-origin:50% 50%;transform:rotate(-90deg);text-align:center;">7</span>
<span class="t" style="left:6.0px;top:1142.9px;width:10.0px;font-size:18px;color:#575757;transform-origin:50% 50%;transform:rotate(-90deg);text-align:center;">8</span>
<span class="t" style="left:6.0px;top:1227.8px;width:10.0px;font-size:18px;color:#575757;transform-origin:50% 50%;transform:rotate(-90deg);text-align:center;">9</span>
<span class="t" style="left:1.0px;top:1312.6px;width:20.0px;font-size:18px;color:#575757;transform-origin:50% 50%;transform:rotate(-90deg);text-align:center;">10</span>
<span class="t" style="left:1.6px;top:1397.4px;width:18.7px;font-size:18px;color:#575757;transform-origin:50% 50%;transform:rotate(-90deg);text-align:center;">11</span>
<span class="t" style="left:1.0px;top:1482.3px;width:20.0px;font-size:18px;color:#575757;transform-origin:50% 50%;transform:rotate(-90deg);text-align:center;">12</span>
<span class="t" style="left:1.0px;top:1567.1px;width:20.0px;font-size:18px;color:#575757;transform-origin:50% 50%;transform:rotate(-90deg);text-align:center;">13</span>
<svg class="a" style="left:0px;top:0px;" width="1920" height="1655" viewBox="0 0 1920 1655"><g fill="#000"><rect x="405.3" y="574" width="393.70" height="10.50"/><rect x="405.3" y="574" width="10.90" height="440.60"/><rect x="405.3" y="1004.3" width="872.30" height="10.30"/><rect x="1266.9" y="574" width="10.70" height="440.60"/><rect x="885" y="574" width="392.60" height="10.50"/><path fill-rule="evenodd" d="M949.200 535.400H1164.400V621.900H949.200ZM960.100 546.300V611.200H1153.800V546.300Z"/><path fill-rule="evenodd" d="M949.200 965.700H1164.400V1052.200H949.200ZM960.100 976.700V1041.400H1153.800V976.700Z"/><rect x="960.100" y="976.700" width="193.700" height="64.700" fill="#fff"/><path fill-rule="evenodd" d="M571.200 944.400L675.500 1004.500V1014.500L571.200 1075.600ZM582 960.400V1059.200L663 1011.200V1007.800Z"/><rect x="675.2" y="944" width="10.20" height="131.90"/><path d="M635.6 932.6L654.0 914.2" stroke="#000" stroke-width="3.200" fill="none"/><path d="M661.1 907.1L656.6 919.6L653.2 915.0L648.6 911.6Z"/><path d="M649.1 946.0L667.5 927.6" stroke="#000" stroke-width="3.200" fill="none"/><path d="M674.6 920.5L670.1 933.0L666.7 928.4L662.1 925.0Z"/><circle cx="799.500" cy="578.900" r="9" fill="#fff" stroke="#000" stroke-width="3.100"/><circle cx="884.600" cy="578.900" r="9" fill="#fff" stroke="#000" stroke-width="3.100"/><rect x="787.8" y="545" width="21.80" height="6.90"/><rect x="795.3" y="537.9" width="7.00" height="21.20"/><rect x="874" y="545" width="21.40" height="6.90"/><rect x="734" y="901.9" width="2.00" height="215.10"/></g></svg>
<!-- status -->
<div class="a" style="left:0px;top:1609.8px;width:1920px;height:46px;background:#24458a;"></div>
<span class="t" style="left:47.4px;top:1622.0px;font-size:23px;color:#eef1f7;transform:scaleX(1.0238);">Seite 1 von 1</span>
<span class="t" style="left:225.9px;top:1622.0px;font-size:23px;color:#eef1f7;transform:scaleX(1.0911);">4 Wörter</span>
<span class="t" style="left:426.6px;top:1622.0px;font-size:23px;color:#eef1f7;transform:scaleX(1.0891);">Deutsch (Deutschland)</span>
<span class="t" style="left:1126.1px;top:1622.0px;font-size:23px;color:#eef1f7;transform:scaleX(1.0622);">Fokus</span>
<span class="t" style="left:1800.5px;top:1623.0px;font-size:22.5px;color:#eef1f7;transform:scaleX(1.0808);">153 %</span>
<svg class="a" style="left:358px;top:1618px;" width="36" height="30" viewBox="0 0 36 30"><path d="M15 4.500C12.500 3 8 2.800 3 2.800V22.500C8 22.500 12.500 22.700 15 24.300" fill="none" stroke="#eef1f7" stroke-width="1.700" stroke-linecap="round" stroke-linejoin="round"/><path d="M15 4.500V24.300" fill="none" stroke="#eef1f7" stroke-width="1.700" stroke-linecap="round" stroke-linejoin="round"/><path d="M15 4.500C17.500 3 21 2.800 24.500 2.800M15 24.300C17.500 22.700 21 22.500 25 22.500" fill="none" stroke="#eef1f7" stroke-width="1.700" stroke-linecap="round" stroke-linejoin="round"/><path d="M14.800 24.500V27" fill="none" stroke="#eef1f7" stroke-width="1.700" stroke-linecap="round" stroke-linejoin="round"/><path d="M21.500 9L32 19.500M32 9L21.500 19.500" fill="none" stroke="#eef1f7" stroke-width="1.700" stroke-linecap="round" stroke-linejoin="round"/></svg>
<svg class="a" style="left:1083px;top:1620px;" width="33" height="26" viewBox="0 0 33 26"><rect x="1.800" y="2.600" width="28.600" height="20.200" rx="2" fill="none" stroke="#eef1f7" stroke-width="1.700" stroke-linecap="round" stroke-linejoin="round"/><path d="M6 10V7H10M22 7H26V10M26 15.500V18.500H22M10 18.500H6V15.500" fill="none" stroke="#eef1f7" stroke-width="1.700" stroke-linecap="round" stroke-linejoin="round"/></svg>
<svg class="a" style="left:1234px;top:1618px;" width="32" height="30" viewBox="0 0 32 30"><rect x="2.500" y="2.600" width="26.400" height="24.400" rx="1.500" fill="none" stroke="#eef1f7" stroke-width="1.700" stroke-linecap="round" stroke-linejoin="round"/><rect x="6.500" y="6.3" width="18.400" height="1.900" fill="#eef1f7"/><rect x="6.500" y="10.3" width="18.400" height="1.900" fill="#eef1f7"/><rect x="6.500" y="14.3" width="18.400" height="1.900" fill="#eef1f7"/><rect x="6.500" y="18.3" width="18.400" height="1.900" fill="#eef1f7"/><rect x="6.500" y="22.3" width="18.400" height="1.900" fill="#eef1f7"/></svg>
<svg class="a" style="left:1302px;top:1618px;" width="36" height="30" viewBox="0 0 36 30"><path d="M26 13V4.300A1.300 1.300 0 0 0 24.700 3H4A1.300 1.300 0 0 0 2.700 4.300V21.200A1.300 1.300 0 0 0 4 22.500H15" fill="none" stroke="#eef1f7" stroke-width="1.700" stroke-linecap="round" stroke-linejoin="round"/><rect x="6.300" y="6.5" width="15.5" height="1.800" fill="#eef1f7"/><rect x="6.300" y="10.5" width="15.5" height="1.800" fill="#eef1f7"/><rect x="6.300" y="14.5" width="11" height="1.800" fill="#eef1f7"/><rect x="6.300" y="18.3" width="8" height="1.800" fill="#eef1f7"/><circle cx="25" cy="20.500" r="8.600" fill="#eef1f7"/><path d="M20.500 15.500C22 17 24 16 24.500 18C25 20 22.500 20.500 23.500 22.500C24.500 24.500 26 24 26 26.500M28 13.500C27 15.500 29.500 16.500 31.500 16" fill="none" stroke="#24458a" stroke-width="1.600"/></svg>
<svg class="a" style="left:1374.5px;top:1618px;" width="34" height="30" viewBox="0 0 34 30"><rect x="1.500" y="5.5" width="3.600" height="1.900" fill="#eef1f7"/><rect x="9" y="5.5" width="12.500" height="1.900" fill="#eef1f7"/><rect x="9.500" y="11.45" width="3.300" height="1.900" fill="#eef1f7"/><rect x="15.800" y="11.45" width="14.500" height="1.900" fill="#eef1f7"/><rect x="9.500" y="17.4" width="3.300" height="1.900" fill="#eef1f7"/><rect x="15.800" y="17.4" width="14.500" height="1.900" fill="#eef1f7"/><rect x="5.500" y="23.35" width="3.600" height="1.900" fill="#eef1f7"/><rect x="12.500" y="23.35" width="13.300" height="1.900" fill="#eef1f7"/></svg>
<svg class="a" style="left:1446px;top:1618px;" width="30" height="30" viewBox="0 0 30 30"><rect x="0.300" y="5.7" width="27.3" height="1.900" fill="#eef1f7"/><rect x="0.300" y="11.6" width="21.4" height="1.900" fill="#eef1f7"/><rect x="0.300" y="17.5" width="25.8" height="1.900" fill="#eef1f7"/><rect x="0.300" y="23.4" width="21.4" height="1.900" fill="#eef1f7"/></svg>
<div class="a" style="left:1511px;top:1630.3px;width:16px;height:4.2px;background:#eef1f7;border-radius:1px;"></div>
<div class="a" style="left:1540.5px;top:1629.6px;width:195.5px;height:7.4px;background:#1a3065;border-radius:4px;"></div>
<div class="a" style="left:1633px;top:1616.500px;width:31.800px;height:31.800px;border-radius:50%;background:#fff;box-shadow:0 0 1px rgba(0,0,0,.4);"></div>
<div class="a" style="left:1749.4px;top:1630.5px;width:16.2px;height:4.4px;background:#eef1f7;"></div>
<div class="a" style="left:1755.3px;top:1624.6px;width:4.4px;height:16.2px;background:#eef1f7;"></div>
</div>
</body></html>
